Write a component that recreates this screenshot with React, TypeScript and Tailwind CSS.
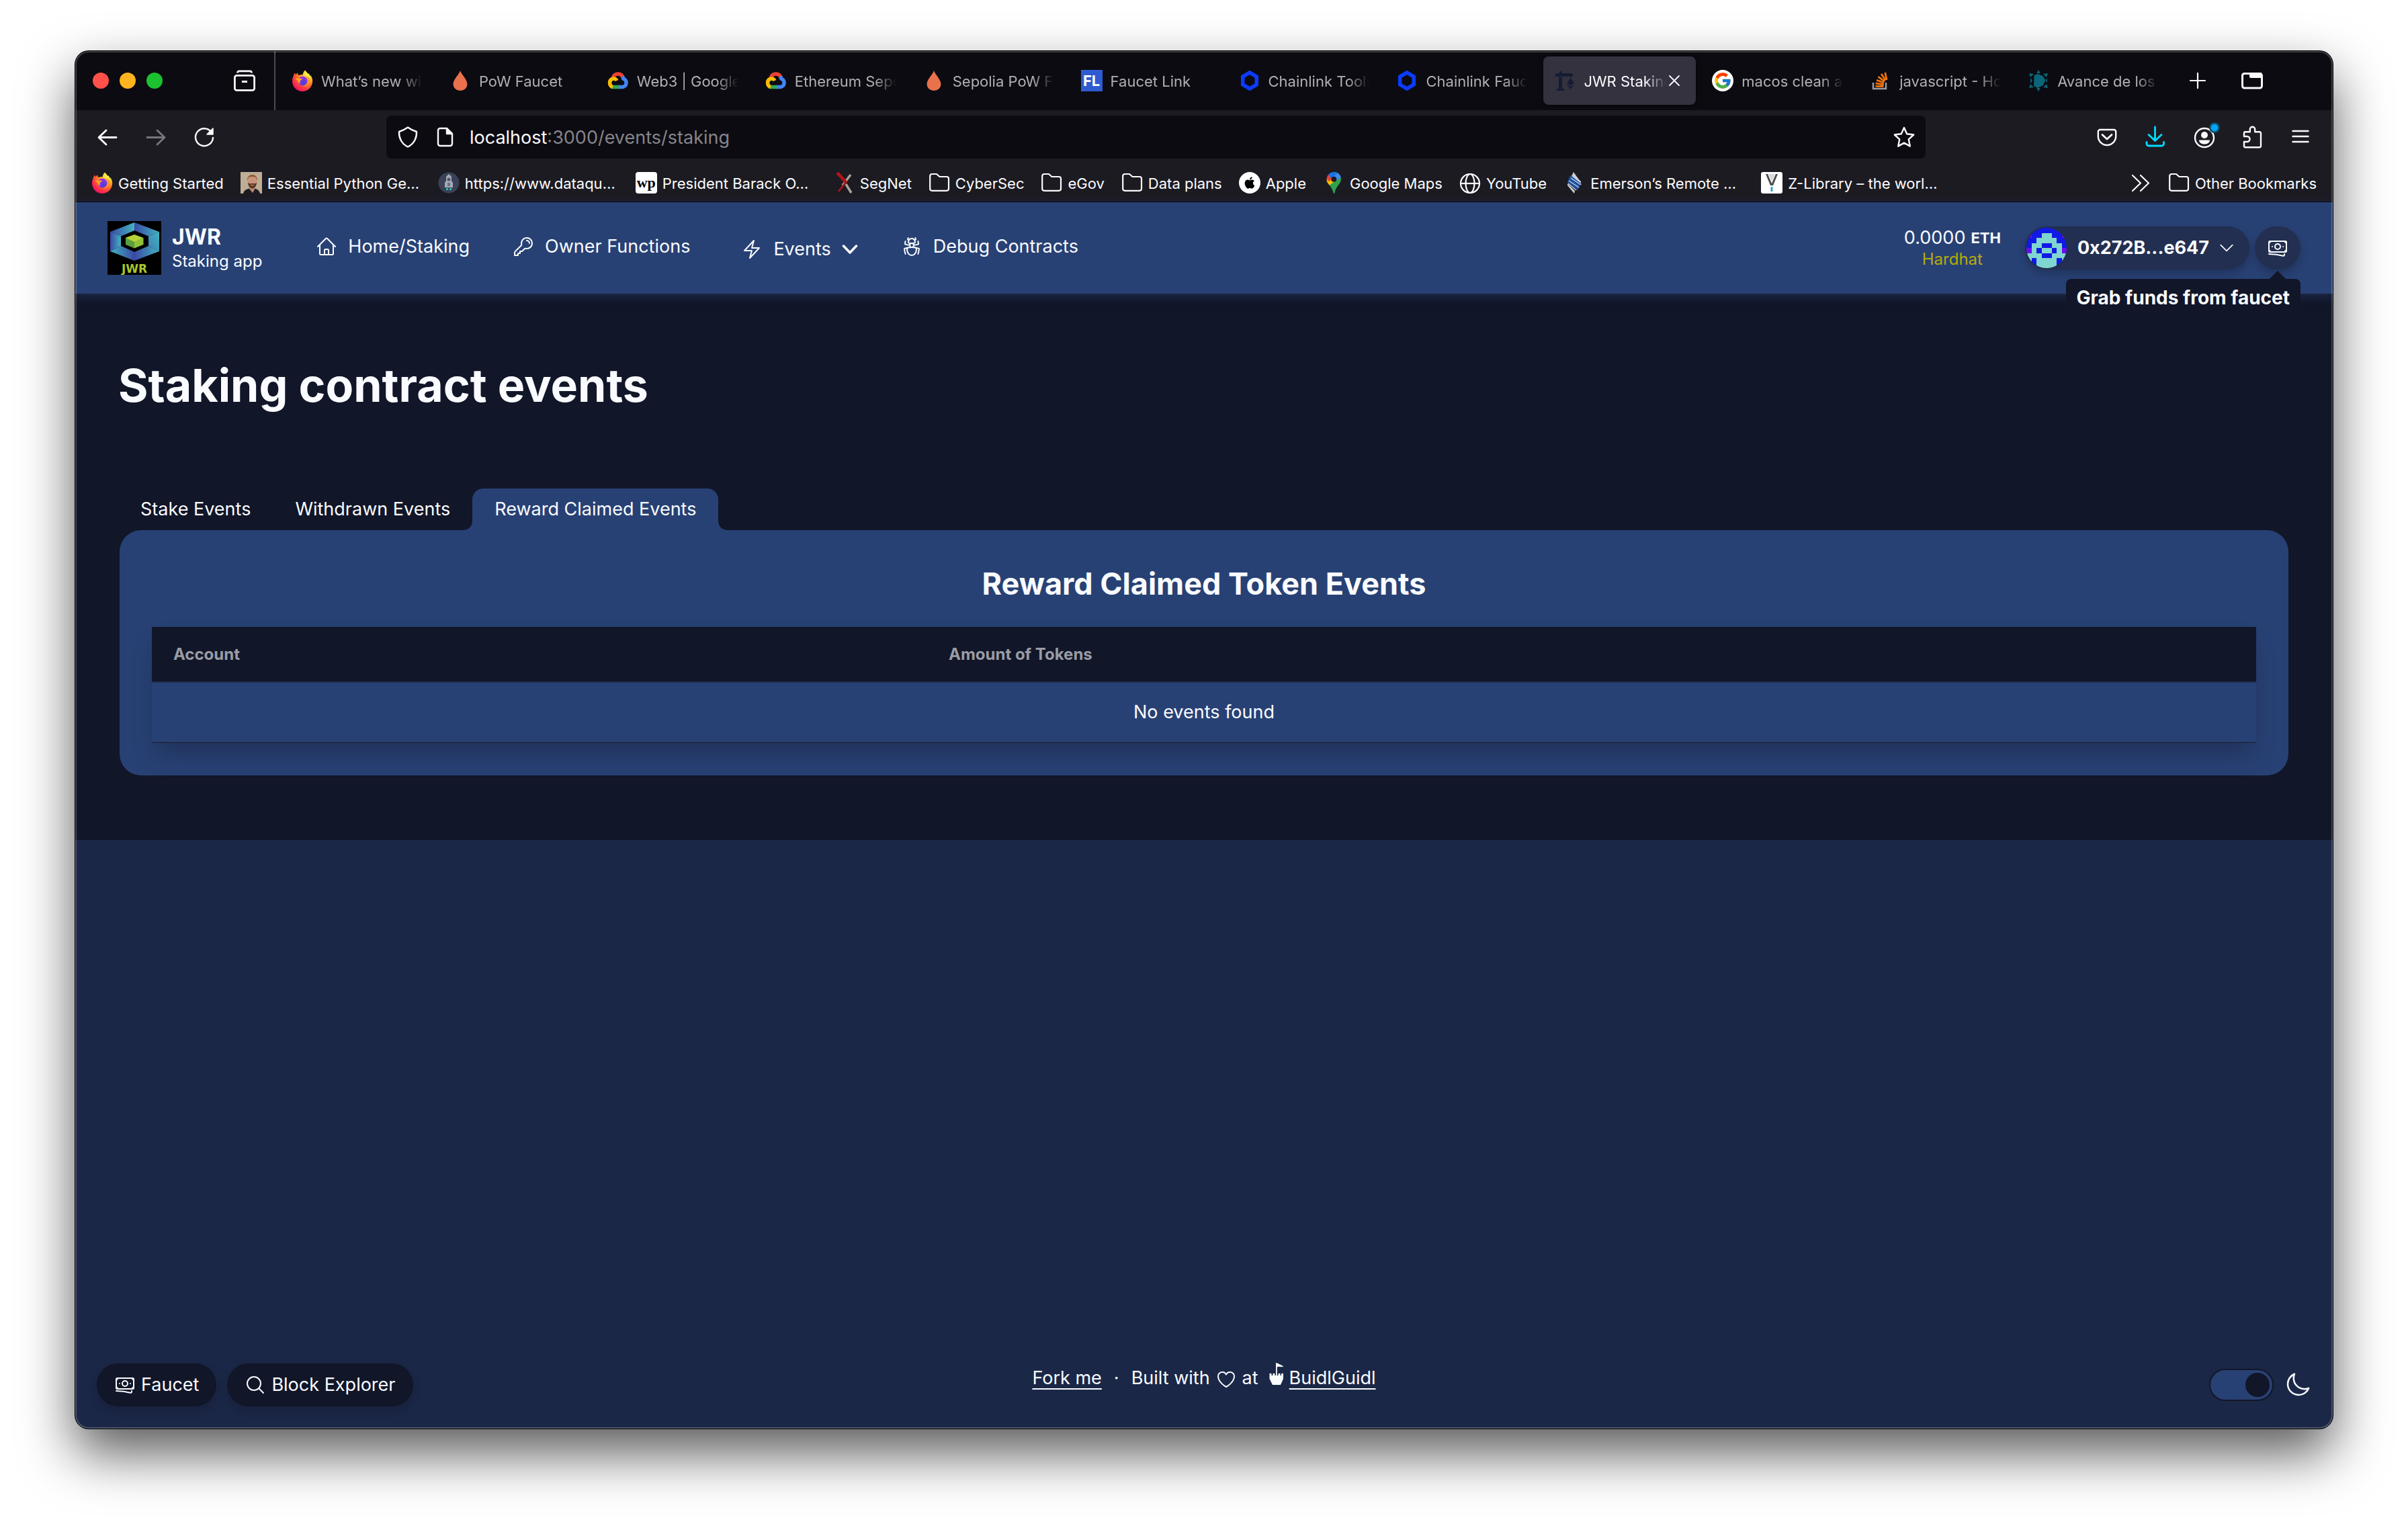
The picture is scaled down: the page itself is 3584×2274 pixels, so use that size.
import React, { useState } from "react";
import {
  HiOutlineHome,
  HiOutlineKey,
  HiOutlineBolt,
  HiOutlineBugAnt,
  HiOutlineBanknotes,
  HiOutlineMagnifyingGlass,
  HiOutlineHeart,
  HiOutlineMoon,
  HiOutlineChevronDown,
} from "react-icons/hi2";
import { FcGoogle } from "react-icons/fc";
import { FaApple } from "react-icons/fa";

type IconProps = { id?: string };

/* ---------- Site icons ---------- */

function Firefox({ id = "ff" }: IconProps) {
  return (
    <svg viewBox="0 0 32 32" className="size-8 shrink-0" aria-hidden="true">
      <defs>
        <radialGradient id={`${id}-body`} cx="0.8" cy="0.12" r="1">
          <stop offset="0.1" stopColor="#fff44f" />
          <stop offset="0.35" stopColor="#ffb829" />
          <stop offset="0.6" stopColor="#ff6a2b" />
          <stop offset="0.82" stopColor="#ff2f48" />
          <stop offset="1" stopColor="#e3106c" />
        </radialGradient>
        <radialGradient id={`${id}-globe`} cx="0.6" cy="0.7" r="0.7">
          <stop offset="0" stopColor="#4a3ed6" />
          <stop offset="1" stopColor="#a033e8" />
        </radialGradient>
      </defs>
      <path
        d="M20 0.5c1.6 2 3.2 3.6 4.6 5.4l1.2-.6c.3 1.4 1.200 2.600 2 3.700l.8-.4c1.600 2.600 2.600 5.200 2.600 8.200C31.200 25.300 24.400 32 16 32S1 25.300 1 17c0-3.700.9-6.500 2.100-8.700.1-1.500.7-2.800 1.900-4 .1 1 .5 1.900 1.100 2.600C7.200 6.200 8 5.200 9.300 4.600c-.2 1.200 0 2.300.7 3.200 1.800-.3 4.600-.8 6.600-.5C17 4.800 17.900 2.400 20 .5z"
        fill={`url(#${id}-body)`}
      />
      <circle cx="16.500" cy="16.500" r="7" fill={`url(#${id}-globe)`} />
      <path
        d="M5 13c3-1.500 5.500-.6 7.500-.4 1.600.2 3.300.2 3.300 1 0 1.100-2.600 1.300-3 2.600-.3 1.300-.8 2.300.4 4.400-2.600-.6-4.300-2.600-4.500-5z"
        fill="#ffa21f"
      />
      <path
        d="M20.500 9.500c3 1.600 4.400 4.600 3.800 7.800-.6 3.500-3.600 6.300-7.600 6.300 4.600 2.300 9.700-.8 10.500-5.800.7-4.200-2-8.300-6.700-8.300z"
        fill="#ff8a28"
        opacity="0.85"
      />
    </svg>
  );
}

const Drop = () => (
  <svg viewBox="0 0 32 32" className="size-8 shrink-0" aria-hidden="true">
    <path d="M16 1c1 5 10.500 13 10.500 20.500a10.500 9.500 0 0 1-21 0C5.500 14 15 6 16 1z" fill="#e9724c" />
  </svg>
);

const GoogleCloud = () => (
  <svg viewBox="0 0 32 32" className="size-8 shrink-0" fill="none" strokeWidth="5.500" aria-hidden="true">
    <path d="M8.500 11.500C10.500 5 20 3.500 23.500 11.500" stroke="#ea4335" />
    <path d="M22.500 9.800c1.200 1.700 1 2.400 1.200 3.200 6 2.500 6 11-1.200 12.500H16" stroke="#4285f4" />
    <path d="M17 25.500H8.500c-1 0-1.800-.2-2.500-.5" stroke="#34a853" />
    <path d="M8 25.500c-5.500-1.500-6-9.500-1-12 3-1.500 6 .2 7 2.500" stroke="#fbbc05" />
  </svg>
);

const FaucetLinkIcon = () => (
  <span className="flex size-8 shrink-0 items-center justify-center bg-[#2f5bd0] text-[22px] leading-8 font-bold text-white" aria-hidden="true">
    FL
  </span>
);

const Chainlink = () => (
  <svg viewBox="0 0 32 32" className="size-8 shrink-0" fill="none" aria-hidden="true">
    <path d="M16 4l10.300 6v12L16 28 5.700 22V10z" stroke="#0b3bff" strokeWidth="5.500" />
  </svg>
);

const Crane = () => (
  <svg viewBox="0 0 32 32" className="size-8 shrink-0" fill="#151c33" aria-hidden="true">
    <path d="M8 3l3-2v4h15l2 2v3H2V6l6-1zM7 11h5v17H7zM4 28h11v3H4zM24 10h1v3h-1z" />
    <path d="M24.500 12l5.500 8-5.500 3-5.500-3zM19.500 22l5 2.500 5-2.500-5 7z" />
  </svg>
);

const GoogleTab = () => (
  <span className="flex size-8 shrink-0 items-center justify-center rounded-full bg-white">
    <FcGoogle className="size-7" aria-hidden="true" />
  </span>
);

const StackOverflow = () => (
  <svg viewBox="0 0 32 32" className="size-8 shrink-0" fill="none" aria-hidden="true">
    <path d="M5 19v9h19v-9" stroke="#9b9da1" strokeWidth="2.500" />
    <g stroke="#f2740d" strokeWidth="2.800">
      <path d="M8.500 24.300h12M8.700 20l12 1.800M10 15.200l11 4M12.500 10.200l9.500 7M17 6l6.500 9.500M22.800 4l2.400 11" />
    </g>
  </svg>
);

const Avance = () => (
  <svg viewBox="0 0 32 32" className="size-8 shrink-0" fill="#0b6477" aria-hidden="true">
    <path d="M16 0l3 5h-6zM16 32l-3-5h6zM2 5l7 1-5 5zM30 5l-7 1 5 5zM2 27l7-1-5-5zM30 27l-7-1 5-5z" />
    <path d="M9.500 8l6-2 7 3 4 6-3.500 8-8 4-6-3z" />
    <path d="M4 12l3 4-3 4zM29 12v8l-2-4z" />
  </svg>
);

const Portrait = () => (
  <svg viewBox="0 0 32 32" className="size-8 shrink-0" aria-hidden="true">
    <path d="M0 0h32v32H0z" fill="#bfae96" />
    <path d="M4 32c1-5 5-7 12-8 8 0 12 3 13 8z" fill="#1d1c22" />
    <path d="M13 20h8v6l-3 5-5-6z" fill="#b98870" />
    <path d="M10.500 12c0-11 14-11 14 0 0 8-3 11.500-7 11.500S10.500 19 10.500 12z" fill="#c9957a" />
    <path d="M10 13c-1-12 16-12 15 0l-2-5c-4-1.500-8-1-11 0z" fill="#8a5a33" />
    <path d="M11 15c1 3 3 2 6.500 2s5.500 1 6.500-2c0 6-3 9.500-6.500 9.500S11 21 11 15z" fill="#5c3a2a" />
    <path d="M15 19h5v1h-5z" fill="#c9957a" />
  </svg>
);

const Dataquest = () => (
  <svg viewBox="0 0 32 32" className="size-8 shrink-0" aria-hidden="true">
    <circle cx="16" cy="16" r="15.500" fill="#3b4257" />
    <path d="M12 7l4-4 4 4v6l2 3v7H10v-7l2-3z" fill="#a5abb8" />
    <circle cx="16" cy="11" r="2.500" fill="#4f566b" />
    <path d="M14 16h4v5h-4z" fill="#6a7185" />
    <path d="M12 24h3v3h-3zM17 24h3v3h-3z" fill="#23c4a0" />
  </svg>
);

const WashingtonPost = () => (
  <span
    className="flex size-8 shrink-0 items-center justify-center rounded-sm bg-white font-['Liberation_Serif',serif] text-[22px] leading-8 font-bold text-black"
    aria-hidden="true"
  >
    wp
  </span>
);

const SegNetIcon = () => (
  <svg viewBox="0 0 32 32" className="size-8 shrink-0" fill="none" aria-hidden="true">
    <path d="M26 4L14 20M19 18l8 13" stroke="#aaa39b" strokeWidth="3.500" />
    <path d="M6 1l14 15" stroke="#b3151b" strokeWidth="4.500" />
    <path d="M19 15L8 29" stroke="#b3151b" strokeWidth="2.500" />
  </svg>
);

const Folder = () => (
  <svg viewBox="0 0 32 32" className="size-8 shrink-0" fill="none" stroke="#fbfbfe" strokeWidth="2.200" aria-hidden="true">
    <path d="M2.200 6a3 3 0 0 1 3-3H12l4.500 4H27a3 3 0 0 1 3 3v14.800a3 3 0 0 1-3 3H5.200a3 3 0 0 1-3-3z" />
  </svg>
);

const AppleIcon = () => (
  <span className="flex size-8 shrink-0 items-center justify-center rounded-full bg-white text-black">
    <FaApple className="size-5" aria-hidden="true" />
  </span>
);

const MapsPin = () => (
  <svg viewBox="0 0 32 32" className="size-8 shrink-0" aria-hidden="true">
    <path d="M16.500 0C22.500 0 27 4.800 27 10.600c0 7.400-7.800 10.400-9.500 20.400-.3 1.300-1.700 1.300-2 0-1-5-3.500-8.600-6-11.400z" fill="#2fa24f" />
    <path d="M9.500 19.600C7 17 5.500 14 5.500 11l6-2 9 3.500z" fill="#fbbc04" />
    <path d="M5.500 11c0-3 1-5 2.500-7l6 4.500-4.500 5.500z" fill="#ea4335" />
    <path d="M8 4c2-2.600 5-4 8.500-4 2 0 4 .6 5.500 1.500l-9 9z" fill="#1a73e8" />
    <path d="M22 1.500c2.500 1.400 4 3.700 4.700 6.500l-7 5-3-6z" fill="#4285f4" />
    <circle cx="16.300" cy="10.800" r="4" fill="#1c1b22" />
  </svg>
);

const Globe = () => (
  <svg viewBox="0 0 32 32" className="size-8 shrink-0" fill="none" stroke="#fbfbfe" strokeWidth="2.200" aria-hidden="true">
    <circle cx="16" cy="17" r="14" />
    <ellipse cx="16" cy="17" rx="6.500" ry="14" />
    <path d="M2.500 17h27" />
  </svg>
);

const Emerson = () => (
  <svg viewBox="0 0 32 32" className="size-8 shrink-0" fill="none" aria-hidden="true">
    <path d="M15 0l10 14 2 5L12 6zM6 17l11 11-1 4L6 20z" fill="#c9cbd0" />
    <path d="M10 5l16 12-5 10L6 15z" fill="#1d4f9f" />
    <path d="M11 9l15 10M8 13l15 10M14 4l12 11M7 17l12 10" stroke="#c6d2e6" strokeWidth="1.300" />
  </svg>
);

const ZLibrary = () => (
  <svg viewBox="0 0 32 32" className="size-8 shrink-0" aria-hidden="true">
    <rect width="32" height="32" rx="3" fill="#fff" />
    <path d="M7 3h3l6 14 6-14h3l-7 17h-4z" fill="#4c4c4e" />
    <path d="M11 3l5 11 5-11z" fill="#d7d7d7" />
    <path d="M14.500 22h3v7h-3z" fill="#2ea3cf" />
  </svg>
);

/* ---------- Browser chrome ---------- */

const TABS: { title: string; icon: React.ReactNode; active?: boolean }[] = [
  { title: "What’s new wi", icon: <Firefox id="ff-tab" /> },
  { title: "PoW Faucet", icon: <Drop /> },
  { title: "Web3 | Google", icon: <GoogleCloud /> },
  { title: "Ethereum Sepo", icon: <GoogleCloud /> },
  { title: "Sepolia PoW Fa", icon: <Drop /> },
  { title: "Faucet Link", icon: <FaucetLinkIcon /> },
  { title: "Chainlink Tools", icon: <Chainlink /> },
  { title: "Chainlink Fauc", icon: <Chainlink /> },
  { title: "JWR Staking", icon: <Crane />, active: true },
  { title: "macos clean a", icon: <GoogleTab /> },
  { title: "javascript - Ho", icon: <StackOverflow /> },
  { title: "Avance de los", icon: <Avance /> },
];

const BOOKMARKS: { label: string; icon: React.ReactNode; clipped?: boolean }[] = [
  { label: "Getting Started", icon: <Firefox id="ff-mark" /> },
  { label: "Essential Python Ge…", icon: <Portrait />, clipped: true },
  { label: "https://www.dataqu…", icon: <Dataquest />, clipped: true },
  { label: "President Barack O…", icon: <WashingtonPost />, clipped: true },
  { label: "SegNet", icon: <SegNetIcon /> },
  { label: "CyberSec", icon: <Folder /> },
  { label: "eGov", icon: <Folder /> },
  { label: "Data plans", icon: <Folder /> },
  { label: "Apple", icon: <AppleIcon /> },
  { label: "Google Maps", icon: <MapsPin /> },
  { label: "YouTube", icon: <Globe /> },
  { label: "Emerson’s Remote …", icon: <Emerson />, clipped: true },
  { label: "Z-Library – the worl…", icon: <ZLibrary />, clipped: true },
];

function TabStrip() {
  return (
    <div className="flex h-22 bg-[#0c0b11]">
      <div className="flex w-[298px] shrink-0 items-center justify-between border-r-2 border-[#4b4a50] pr-7 pl-[26px]">
        <div className="flex gap-4">
          <button aria-label="Close window" className="size-6 rounded-full bg-[#ff5149]" />
          <button aria-label="Minimize window" className="size-6 rounded-full bg-[#ffb41f]" />
          <button aria-label="Zoom window" className="size-6 rounded-full bg-[#1bc12f]" />
        </div>
        <button aria-label="Firefox View">
          <svg viewBox="0 0 32 32" className="size-8" fill="none" stroke="#fbfbfe" strokeWidth="2.800" aria-hidden="true">
            <path d="M5.500 4.500c0-2 1-2.600 2.500-2.600h16c1.500 0 2.500.6 2.500 2.600" />
            <rect x="1.400" y="8.400" width="29.200" height="22" rx="3" />
            <path d="M12 17.500h8" />
          </svg>
        </button>
      </div>
      <div className="flex min-w-0 flex-1 pl-1" role="tablist" aria-label="Browser tabs">
        {TABS.map((tab) => (
          <div key={tab.title} className="flex min-w-0 flex-1 items-stretch py-2">
            <div
              className={
                tab.active
                  ? "mx-1 flex min-w-0 flex-1 items-center rounded-lg bg-[#33323e] pr-1 pl-4 text-[#fbfbfe] shadow-[0_0_8px_rgba(0,0,0,0.6)]"
                  : "mx-1 flex min-w-0 flex-1 items-center rounded-lg px-4 text-[#b0b0b4]"
              }
            >
              <button role="tab" aria-selected={!!tab.active} className="flex min-w-0 flex-1 items-center gap-3 text-left">
                {tab.icon}
                <span className="min-w-0 flex-1 overflow-hidden [mask-image:linear-gradient(to_left,transparent,black_32px)] pt-0.5 text-[22px] leading-8 whitespace-nowrap">
                  {tab.title}
                </span>
              </button>
              {tab.active && (
                <button aria-label="Close tab" className="flex w-10 shrink-0 items-center pl-1">
                  <svg viewBox="0 0 16 16" className="size-4" stroke="#fbfbfe" strokeWidth="1.800" strokeLinecap="round" aria-hidden="true">
                    <path d="M1 1l14 14M15 1L1 15" />
                  </svg>
                </button>
              )}
            </div>
          </div>
        ))}
      </div>
      <div className="flex w-[239px] shrink-0 items-center gap-[53px] pl-[26px]">
        <button aria-label="New tab">
          <svg viewBox="0 0 24 24" className="size-6" stroke="#fbfbfe" strokeWidth="2.200" strokeLinecap="round" aria-hidden="true">
            <path d="M12 1v22M1 12h22" />
          </svg>
        </button>
        <button aria-label="List all tabs">
          <svg viewBox="0 0 32 32" className="size-8" aria-hidden="true">
            <rect x="1.500" y="5.500" width="29" height="21.500" rx="3" fill="none" stroke="#fbfbfe" strokeWidth="3" />
            <path d="M12 4h18v8H14a2 2 0 0 1-2-2z" fill="#fbfbfe" />
          </svg>
        </button>
      </div>
    </div>
  );
}

function ToolButton({ label, children }: { label: string; children: React.ReactNode }) {
  return (
    <button aria-label={label} className="flex h-16 w-18 items-center justify-center">
      <svg
        viewBox="0 0 32 32"
        className="size-8 overflow-visible"
        fill="none"
        stroke="#fbfbfe"
        strokeWidth="2.400"
        strokeLinecap="round"
        strokeLinejoin="round"
        aria-hidden="true"
      >
        {children}
      </svg>
    </button>
  );
}

function NavBar() {
  const [path, setPath] = useState(":3000/events/staking");
  return (
    <div className="flex h-20 items-center bg-[#1c1b22] px-3">
      <ToolButton label="Back">
        <path d="M29 16.500H3.500M14 6L3 16.500 14 27" strokeWidth="2.800" />
      </ToolButton>
      <ToolButton label="Forward">
        <path d="M3 16.500h25.500M18 6l11 10.500L18 27" stroke="#77767b" strokeWidth="2.800" />
      </ToolButton>
      <ToolButton label="Reload">
        <path d="M26.500 8.500A13 13 0 1 0 29 17" />
        <path d="M29 3v9h-9z" fill="#fbfbfe" strokeWidth="1.500" />
      </ToolButton>
      <div className="mr-[234px] ml-[235px] flex h-16 flex-1 items-center rounded-lg bg-[#0c0b11] px-4">
        <svg viewBox="0 0 32 32" className="size-8 shrink-0" fill="none" stroke="#fbfbfe" strokeWidth="2.400" strokeLinejoin="round" aria-hidden="true">
          <path d="M16 1.500c4 3 8 5 13 6.500.5 8-3 18-13 22.500C6 26 2.500 16 3 8c5-1.500 9-3.500 13-6.500z" />
        </svg>
        <svg viewBox="0 0 32 32" className="ml-6 size-8 shrink-0" fill="none" stroke="#fbfbfe" strokeWidth="2.400" strokeLinejoin="round" aria-hidden="true">
          <path d="M8 3h10l8 8v15a3 3 0 0 1-3 3H8a3 3 0 0 1-3-3V6a3 3 0 0 1 3-3z" />
          <path d="M18 3v8h8z" fill="#fbfbfe" />
        </svg>
        <div className="ml-5 flex flex-1 items-center pt-0.5 text-[27px] leading-9">
          <label htmlFor="address" className="text-[#fbfbfe]">
            localhost
          </label>
          <input
            id="address"
            value={path}
            onChange={(e) => setPath(e.target.value)}
            className="min-w-0 flex-1 bg-transparent text-[#86858a] outline-none"
          />
        </div>
        <button aria-label="Bookmark this page">
          <svg viewBox="0 0 32 32" className="size-8" fill="none" stroke="#fbfbfe" strokeWidth="2.400" strokeLinejoin="round" aria-hidden="true">
            <path d="M16 2l4.200 9.300 10 1.200-7.400 6.900 2 10.200L16 24.600l-8.800 5 2-10.200L1.800 12.500l10-1.200z" />
          </svg>
        </button>
      </div>
      <ToolButton label="Save to Pocket">
        <path d="M2.800 8a3 3 0 0 1 3-3h20.400a3 3 0 0 1 3 3v7c0 7-6 13-13.200 13S2.800 22 2.800 15z" />
        <path d="M9 12.500l7 6.500 7-6.500" strokeWidth="2.800" />
      </ToolButton>
      <ToolButton label="Downloads">
        <g stroke="#00ddff" strokeWidth="2.800">
          <path d="M15.500 1v20M6 12.500l9.500 9 9.500-9M3 23.500v2.500a3 3 0 0 0 3 3h19.500a3 3 0 0 0 3-3v-2.500" />
        </g>
      </ToolButton>
      <ToolButton label="Account">
        <circle cx="17" cy="17" r="14" />
        <circle cx="17" cy="13" r="5" fill="#fbfbfe" stroke="none" />
        <path d="M9 20.500h16c0 4-4 6-8 6s-8-2-8-6z" fill="#fbfbfe" stroke="none" />
        <circle cx="32" cy="2" r="8" fill="#12485f" stroke="none" />
        <circle cx="32" cy="2" r="5.500" fill="#00a4f4" stroke="none" />
      </ToolButton>
      <ToolButton label="Extensions">
        <path d="M4 12.500V10a1.800 1.800 0 0 1 1.800-1.800h7V4.500a3.700 3.700 0 0 1 7.400 0v3.700h7A1.800 1.800 0 0 1 29 10v19.500a1.800 1.800 0 0 1-1.800 1.800H5.800A1.800 1.800 0 0 1 4 29.500V23h4.500a4 4 0 0 0 0-8H4z" />
      </ToolButton>
      <ToolButton label="Open menu">
        <path d="M4.500 7h23M4.500 15h23M4.500 23h23" />
      </ToolButton>
    </div>
  );
}

function BookmarksBar() {
  return (
    <div className="flex h-[57px] items-center gap-[25px] border-b border-black bg-[#1c1b22] px-6 text-[22px] leading-8 text-[#fbfbfe]">
      {BOOKMARKS.map((mark) => (
        <a key={mark.label} href="#bookmark" className="flex shrink-0 items-center gap-2">
          {mark.icon}
          <span className={mark.clipped ? "w-[229px] pt-0.5 whitespace-nowrap" : "pt-0.5 whitespace-nowrap"}>{mark.label}</span>
        </a>
      ))}
      <button aria-label="Show more bookmarks" className="ml-auto">
        <svg viewBox="0 0 32 32" className="size-8" fill="none" stroke="#fbfbfe" strokeWidth="2.200" strokeLinecap="round" strokeLinejoin="round" aria-hidden="true">
          <path d="M4 5l12 11.500L4 28M16 5l12 11.500L16 28" />
        </svg>
      </button>
      <a href="#other" className="flex shrink-0 items-center gap-2">
        <Folder />
        <span className="pt-0.5">Other Bookmarks</span>
      </a>
    </div>
  );
}

/* ---------- Staking app ---------- */

function Logo() {
  return (
    <svg viewBox="0 0 80 80" className="size-20 shrink-0" role="img" aria-label="JWR">
      <defs>
        <linearGradient id="lg-a" x1="0" x2="1">
          <stop offset="0" stopColor="#3a49a5" />
          <stop offset="1" stopColor="#41b4bf" />
        </linearGradient>
        <linearGradient id="lg-b" x1="1" x2="0">
          <stop offset="0" stopColor="#3a49a5" />
          <stop offset="1" stopColor="#41b4bf" />
        </linearGradient>
        <linearGradient id="lg-c" x1="0" y1="1" x2="1" y2="0">
          <stop offset="0" stopColor="#3f7fb8" />
          <stop offset="1" stopColor="#41b4bf" />
        </linearGradient>
      </defs>
      <path d="M0 0h80v80H0z" fill="#000" />
      <path d="M40 2v12L20 22.500 4 16z" fill="url(#lg-a)" />
      <path d="M40 2v12l21 8.500L77 16z" fill="url(#lg-a)" />
      <path d="M4 16l16 6.500V37L4 45z" fill="url(#lg-a)" />
      <path d="M77 16l-16 6.500V37l16 8z" fill="url(#lg-c)" />
      <path d="M4 45l16-8 20 9v13z" fill="url(#lg-b)" />
      <path d="M77 45l-16-8-21 9v13z" fill="url(#lg-a)" />
      <path d="M40 20l13.500 5-13.500 7-13.500-7z" fill="#b5d334" />
      <path d="M27 25l13 6v9.500L27 35z" fill="#5ba03e" />
      <path d="M53.500 25L40 31v9.500L53.500 35z" fill="#8fc23a" />
      <text x="40" y="77" textAnchor="middle" fill="#a9c62b" className="font-['DejaVu_Sans',sans-serif] text-[17px] font-bold">
        JWR
      </text>
    </svg>
  );
}

const BLOCKIE = ["bbbbbbbb", "pbbttbbp", "bbttttbb", "bttbbttb", "ptbttbtp", "tttbbttt", "tbttttbt", "tbttttbt"];
const BLOCKIE_COLORS: Record<string, string> = { b: "#1019e6", t: "#7fd5cf", p: "#6a0cf5" };

function Avatar() {
  return (
    <svg viewBox="0 0 8 8" className="size-[60px] shrink-0 rounded-full" shapeRendering="crispEdges" aria-hidden="true">
      {BLOCKIE.flatMap((row, y) =>
        row.split("").map((cell, x) => <rect key={`${x}-${y}`} x={x} y={y} width="1" height="1" fill={BLOCKIE_COLORS[cell]} />),
      )}
    </svg>
  );
}

function Header() {
  return (
    <header className="relative z-10 flex min-h-34 items-center bg-[#284174] px-12 shadow-[0_4px_14px_#1f2c50]">
      <a href="#home" className="flex shrink-0 items-center gap-4">
        <Logo />
        <span className="flex flex-col pt-1">
          <span className="text-[32px] leading-9 font-bold">JWR</span>
          <span className="text-2xl leading-9">Staking app</span>
        </span>
      </a>
      <nav className="mb-1 ml-20 flex items-center gap-16 text-[27px] leading-10 whitespace-nowrap">
        <a href="#staking" className="flex items-center gap-4">
          <HiOutlineHome className="size-8" />
          Home/Staking
        </a>
        <a href="#owner" className="flex items-center gap-4">
          <HiOutlineKey className="size-8" />
          Owner Functions
        </a>
        <button className="flex items-center gap-4 pt-2 pl-3">
          <HiOutlineBolt className="size-8" />
          Events
          <svg viewBox="0 0 24 24" className="size-6" fill="none" stroke="currentColor" strokeWidth="3.500" strokeLinecap="round" strokeLinejoin="round" aria-hidden="true">
            <path d="M2.500 7l9.500 10 9.500-10" />
          </svg>
        </button>
        <a href="#debug" className="flex items-center gap-4">
          <HiOutlineBugAnt className="size-8" />
          Debug Contracts
        </a>
      </nav>
      <div className="ml-auto flex items-center">
        <div className="mr-9 flex flex-col items-center pt-0.5 leading-8">
          <span className="flex items-center gap-2 text-[27px] leading-8">
            0.0000 <span className="text-[22px] font-bold">ETH</span>
          </span>
          <span className="text-2xl leading-8 text-[#b5ab0b]">Hardhat</span>
        </div>
        <button className="mr-2 flex h-16 items-center rounded-full bg-[#222f50] pr-5 pl-0.5 text-[27px] leading-8 font-bold shadow-[0_6px_12px_rgba(17,22,42,0.3)]">
          <Avatar />
          <span className="mr-3 ml-4">0x272B...e647</span>
          <HiOutlineChevronDown className="size-7" aria-hidden="true" />
        </button>
        <div className="relative">
          <button
            aria-label="Faucet"
            aria-describedby="faucet-tip"
            className="flex h-16 w-17 items-center justify-center rounded-full bg-[#222f50] shadow-[0_6px_12px_rgba(17,22,42,0.3)]"
          >
            <HiOutlineBanknotes className="size-8" />
          </button>
          <div className="absolute top-full right-0 flex flex-col items-end pt-0.5">
            <div className="mr-[22px] size-0 border-x-12 border-b-12 border-x-transparent border-b-[#111628]" />
            <div id="faucet-tip" role="tooltip" className="rounded-lg bg-[#111628] px-4 py-2 text-[28px] leading-10 font-bold whitespace-nowrap">
              Grab funds from faucet
            </div>
          </div>
        </div>
      </div>
    </header>
  );
}

const EVENT_TABS = ["Stake Events", "Withdrawn Events", "Reward Claimed Events"];

function EventsPage() {
  const [selected, setSelected] = useState(2);
  return (
    <main className="bg-[#111628] px-16 pt-24 pb-24">
      <h1 className="mb-[114px] text-[68px] leading-20 font-bold">Staking contract events</h1>
      <div className="flex" role="tablist" aria-label="Staking contract events">
        {EVENT_TABS.map((name, i) => (
          <button
            key={name}
            role="tab"
            aria-selected={i === selected}
            onClick={() => setSelected(i)}
            className={
              i === selected
                ? "relative h-[62px] rounded-t-2xl bg-[#284174] px-[33px] text-[27px] leading-8"
                : "h-[62px] px-[33px] text-[27px] leading-8"
            }
          >
            {i === selected && (
              <>
                <span className="absolute bottom-0 -left-3 size-3 bg-[radial-gradient(circle_at_0_0,transparent_11px,#284174_12px)]" />
                <span className="absolute -right-3 bottom-0 size-3 bg-[radial-gradient(circle_at_100%_0,transparent_11px,#284174_12px)]" />
              </>
            )}
            {name}
          </button>
        ))}
      </div>
      <section className="mx-0.5 rounded-4xl bg-[#284174] p-12">
        <h2 className="mb-8 text-center text-[45px] leading-16 font-bold">Reward Claimed Token Events</h2>
        <table className="w-full table-fixed border-collapse shadow-[0_20px_30px_-6px_rgba(17,22,42,0.35)]">
          <thead>
            <tr className="h-[82px] border-b-2 border-[#1f2b4d] bg-[#111628] text-left text-2xl text-[#9a9ca5]">
              <th className="w-[1154px] px-8 font-bold">Account</th>
              <th className="px-8 font-bold">Amount of Tokens</th>
            </tr>
          </thead>
          <tbody>
            <tr className="h-[90px] border-b-2 border-[#1f2b4d] bg-[#284174]">
              <td colSpan={2} className="text-center text-[27px] leading-10">
                No events found
              </td>
            </tr>
          </tbody>
        </table>
      </section>
    </main>
  );
}

const Castle = () => (
  <svg viewBox="0 0 22 34" className="h-[34px] w-[22px]" fill="currentColor" aria-hidden="true">
    <path d="M10 0c4 1 6 3 11.500 5.200C18 7.500 15 5 11.800 6.500V19h1.700v-3h3v3H18v-3h3v8l-4 9H5l-4.500-9v-8h3v3h2v-3h3v3H10z" />
  </svg>
);

function Footer() {
  const [dark, setDark] = useState(true);
  return (
    <footer className="mt-auto grid grid-cols-[1fr_auto_1fr] items-center p-8 text-[27px] leading-8 whitespace-nowrap">
      <div className="flex gap-4">
        <a href="#faucet" className="flex h-16 items-center gap-2 rounded-full bg-[#111628] px-[26px] shadow-[0_6px_12px_rgba(17,22,42,0.35)]">
          <HiOutlineBanknotes className="size-8" />
          Faucet
        </a>
        <a href="#explorer" className="flex h-16 items-center gap-2 rounded-full bg-[#111628] px-[26px] shadow-[0_6px_12px_rgba(17,22,42,0.35)]">
          <HiOutlineMagnifyingGlass className="size-8" />
          Block Explorer
        </a>
      </div>
      <div className="flex items-center pb-5">
        <a href="#fork" className="underline decoration-2 underline-offset-6">
          Fork me
        </a>
        <span className="mx-[18px]">·</span>
        <span>Built with</span>
        <HiOutlineHeart className="mx-2 mt-1 size-8" aria-label="love" />
        <span>at</span>
        <span className="mr-2 mb-3 ml-4">
          <Castle />
        </span>
        <a href="#buidlguidl" className="underline decoration-2 underline-offset-6">
          BuidlGuidl
        </a>
      </div>
      <div className="flex items-center justify-end gap-4">
        <input
          id="theme"
          type="checkbox"
          role="switch"
          checked={dark}
          onChange={(e) => setDark(e.target.checked)}
          className="flex h-12 w-24 appearance-none items-center rounded-full border-2 border-[#111628] bg-[#284174] px-1 before:size-9 before:rounded-full before:bg-[#111628] checked:justify-end"
        />
        <label htmlFor="theme" aria-label="Dark mode">
          <HiOutlineMoon className="size-10" />
        </label>
      </div>
    </footer>
  );
}

export default function App() {
  return (
    <div className="flex min-h-screen flex-col bg-white px-28 pt-19 pb-37 font-['Inter',sans-serif]">
      <div className="relative flex flex-1 flex-col overflow-hidden rounded-[20px] bg-[#1b2746] shadow-[0_0_0_1px_#000,0_36px_80px_rgba(0,0,0,0.66)]">
        <TabStrip />
        <NavBar />
        <BookmarksBar />
        <div className="flex flex-1 flex-col text-[#f9fbff]">
          <Header />
          <EventsPage />
          <Footer />
        </div>
        <div className="pointer-events-none absolute inset-0 z-20 rounded-[20px] shadow-[inset_0_0_0_2px_rgba(255,255,255,0.22)]" />
      </div>
    </div>
  );
}
